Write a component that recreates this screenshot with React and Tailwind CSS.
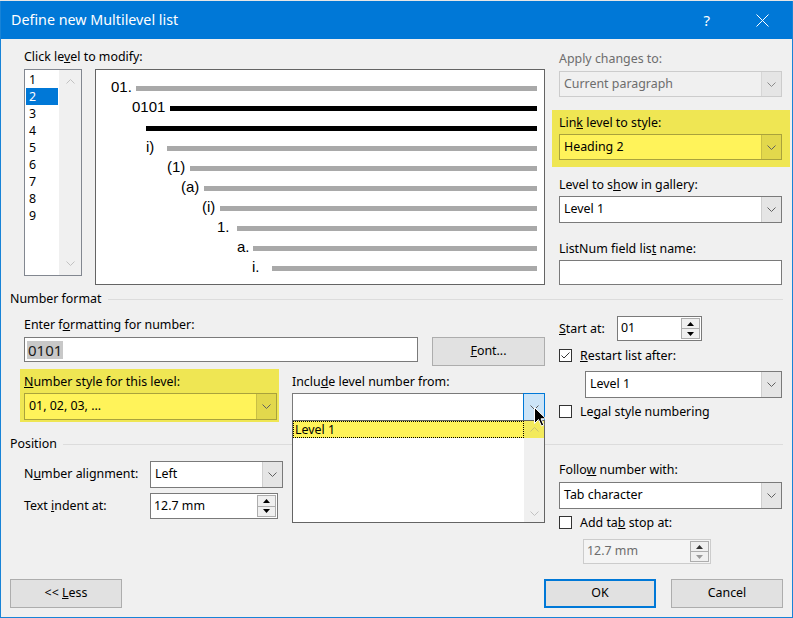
import React from "react";

const ChevDown = ({ color = "#606060" }) => (
  <svg width="9" height="5" viewBox="0 0 9 5">
    <path d="M0.5 0.5L4.5 4.5L8.5 0.5" fill="none" stroke={color} />
  </svg>
);

const ChevUp = ({ color = "#c2c2c2" }) => (
  <svg width="9" height="5" viewBox="0 0 9 5">
    <path d="M0.5 4.5L4.5 0.5L8.5 4.5" fill="none" stroke={color} />
  </svg>
);

const TriUp = ({ color = "#000" }) => (
  <svg width="7" height="4" viewBox="0 0 7 4">
    <polygon points="0,4 3.5,0 7,4" fill={color} />
  </svg>
);

const TriDown = ({ color = "#000" }) => (
  <svg width="7" height="4" viewBox="0 0 7 4">
    <polygon points="0,0 7,0 3.5,4" fill={color} />
  </svg>
);

const Combo = ({ className = "", text, disabled, yellow, active }) => {
  const box = disabled
    ? "border-[#cccccc] bg-[#f0f0f0] text-[#6d6d6d]"
    : yellow
    ? "border-[#a9a23c] bg-[#fff35a]"
    : "border-[#7a7a7a] bg-white";
  const arrow = active
    ? "-my-[1px] -mr-[1px] w-[22px] border border-[#0078d7] bg-[#cce4f7]"
    : yellow
    ? "w-[20px] border-l border-[#c9bf45] bg-[#e2d84c]"
    : disabled
    ? "w-[20px] border-l border-[#d6d6d6] bg-[#e5e5e5]"
    : "w-[20px] border-l border-[#cfcfcf] bg-[#e5e5e5]";
  return (
    <div className={`flex border ${box} ${className}`}>
      <div className="flex-1 flex items-center pl-[4px] whitespace-nowrap">{text}</div>
      <div className={`flex items-center justify-center ${arrow}`}>
        <ChevDown color={disabled ? "#8a8a8a" : "#606060"} />
      </div>
    </div>
  );
};

const Spin = ({ className = "", text, disabled }) => (
  <div
    className={`flex border ${
      disabled ? "border-[#cccccc] bg-[#f4f4f4] text-[#6d6d6d]" : "border-[#7a7a7a] bg-white"
    } ${className}`}
  >
    <div className="flex-1 flex items-center pl-[3px] whitespace-nowrap">{text}</div>
    <div className="w-[19px] flex flex-col my-[1px] mr-[1px]">
      <div className="flex-1 border border-[#adadad] bg-[#f0f0f0] flex items-center justify-center">
        <TriUp color={disabled ? "#333" : "#000"} />
      </div>
      <div className="flex-1 border border-t-0 border-[#adadad] bg-[#f0f0f0] flex items-center justify-center">
        <TriDown color={disabled ? "#9a9a9a" : "#000"} />
      </div>
    </div>
  </div>
);

const Check = ({ checked }) => (
  <div className="w-[13px] h-[13px] border border-[#333333] bg-white flex items-center justify-center shrink-0">
    {checked && (
      <svg width="11" height="11" viewBox="0 0 11 11">
        <path d="M1.5 5.5L4 8L9.5 2.5" fill="none" stroke="#333" strokeWidth="1" />
      </svg>
    )}
  </div>
);

const Button = ({ className = "", children, primary }) => (
  <div
    className={`w-[112px] h-[29px] flex items-center justify-center bg-[#e1e1e1] ${
      primary ? "border-2 border-[#0078d7]" : "border border-[#adadad]"
    } ${className}`}
  >
    {children}
  </div>
);

const Group = ({ children, className = "" }) => (
  <div className={`flex items-center h-[16px] ${className}`}>
    <span className="leading-[16px] whitespace-nowrap">{children}</span>
    <div className="flex-1 ml-[6px] h-px bg-[#dcdcdc]"></div>
  </div>
);

const rows = [
  { t: "01.", x: 111, l: 136, c: "gray" },
  { t: "0101", x: 132, l: 170, c: "black" },
  { t: "", x: 146, l: 146, c: "black" },
  { t: "i)", x: 146, l: 167, c: "gray" },
  { t: "(1)", x: 167, l: 190, c: "gray" },
  { t: "(a)", x: 181, l: 204, c: "gray" },
  { t: "(i)", x: 202, l: 220, c: "gray" },
  { t: "1.", x: 217, l: 237, c: "gray" },
  { t: "a.", x: 237, l: 253, c: "gray" },
  { t: "i.", x: 252, l: 272, c: "gray" },
];

const Preview = () => (
  <div className="w-[450px] h-[216px] border border-[#646464] bg-white pt-[8px] pr-[7px]">
    {rows.map((r, i) => (
      <div key={i} className="h-[20px] flex items-center" style={{ paddingLeft: r.x - 96 }}>
        <span
          className="font-['Liberation_Sans',Arial,sans-serif] text-[15px] leading-[18px] mb-[2px] whitespace-nowrap"
          style={{ width: r.l - r.x }}
        >
          {r.t}
        </span>
        <div className={`flex-1 h-[5px] ${r.c === "black" ? "bg-black" : "bg-[#a9a9a9]"}`}></div>
      </div>
    ))}
  </div>
);

const LevelList = () => (
  <div className="w-[58px] h-[207px] border border-[#828790] bg-white flex">
    <div className="w-[34px] pt-[1px]">
      {[1, 2, 3, 4, 5, 6, 7, 8, 9].map((n) => (
        <div
          key={n}
          className={`h-[17px] leading-[17px] mx-[1px] pl-[3px] ${n === 2 ? "bg-[#0078d7] text-white" : ""}`}
        >
          {n}
        </div>
      ))}
    </div>
    <div className="flex-1 bg-[#f0f0f0] flex flex-col justify-between items-center py-[9px]">
      <ChevUp />
      <ChevDown color="#c2c2c2" />
    </div>
  </div>
);

export default function App() {
  return (
    <div className="w-[793px] h-[618px] flex flex-col bg-[#f0f0f0] text-[12.4px] text-black font-['Noto_Sans','Segoe_UI',sans-serif] overflow-hidden">
      <div className="h-px bg-[#e6e6e6]"></div>
      <div className="flex-1 flex flex-col border-x border-b border-[#1883d7]">
        {/* title bar */}
        <div className="h-[38px] bg-[#0078d7] text-white flex items-center pl-[10px] pr-[23px]">
          <span className="text-[14.3px] leading-[20px]">Define new Multilevel list</span>
          <span className="ml-auto text-[15px] leading-[20px]">?</span>
          <svg className="ml-[46px]" width="13" height="13" viewBox="0 0 13 13">
            <path d="M0.5 0.5L12.5 12.5M12.5 0.5L0.5 12.5" stroke="#fff" strokeWidth="1" />
          </svg>
        </div>

        <div className="flex-1 flex flex-col px-[9px]">
          {/* top section */}
          <div className="flex pl-[14px]">
            <div className="w-[521px]">
              <div className="mt-[10px] leading-[16px]">
                Click le<u>v</u>el to modify:
              </div>
              <div className="mt-[4px] flex items-start gap-[13px]">
                <LevelList />
                <Preview />
              </div>
            </div>
            <div className="ml-[14px] w-[223px]">
              <div className="mt-[12px] leading-[16px] text-[#6d6d6d]">Apply changes to:</div>
              <Combo className="mt-[4px] h-[26px]" text="Current paragraph" disabled />
              <div className="mt-[13px] -ml-[7px] -mr-[8px] pl-[7px] pr-[8px] pt-[5px] pb-[7px] bg-[#efe653]">
                <div className="leading-[16px]">
                  Lin<u>k</u> level to style:
                </div>
                <Combo className="mt-[3px] h-[26px]" text="Heading 2" yellow />
              </div>
              <div className="mt-[10px] leading-[16px]">
                Level to s<u>h</u>ow in gallery:
              </div>
              <Combo className="mt-[3px] h-[27px]" text="Level 1" />
              <div className="mt-[18px] leading-[16px]">
                ListNum field lis<u>t</u> name:
              </div>
              <div className="mt-[3px] h-[25px] border border-[#7a7a7a] bg-white"></div>
            </div>
          </div>

          <Group className="mt-[6px]">Number format</Group>

          {/* number format section */}
          <div className="flex pl-[14px]">
            <div className="w-[521px]">
              <div className="mt-[10px] leading-[16px]">
                Enter f<u>o</u>rmatting for number:
              </div>
              <div className="mt-[4px] flex items-start">
                <div className="w-[394px] h-[25px] border border-[#7a7a7a] bg-white flex items-center pl-[2px]">
                  <span className="bg-[#c8c8c8] text-[15px] leading-[18px] px-[1px] text-[#1a1a1a]">0101</span>
                </div>
                <Button className="ml-[14px] w-[113px] h-[28px]">
                  <span>
                    <u>F</u>ont...
                  </span>
                </Button>
              </div>
              <div className="mt-[3px] flex items-start">
                <div className="-ml-[4px] w-[259px] pl-[4px] pt-[5px] pb-[2px] bg-[#efe653]">
                  <div className="leading-[16px]">
                    <u>N</u>umber style for this level:
                  </div>
                  <Combo className="mt-[3px] h-[27px] w-[253px]" text="01, 02, 03, ..." yellow />
                </div>
                <div className="ml-[13px] pt-[5px]">
                  <div className="leading-[16px]">
                    Inclu<u>d</u>e level number from:
                  </div>
                  <div className="relative mt-[3px]">
                    <Combo className="h-[28px] w-[253px]" text="" active />
                    <div className="absolute top-[27px] left-0 w-[253px] h-[103px] border border-[#646464] bg-white flex z-10">
                      <div className="flex-1">
                        <div className="h-[17px] leading-[15px] border border-dotted border-black bg-[#fff35a] pl-[1px]">
                          Level 1
                        </div>
                      </div>
                      <div className="w-[20px] bg-[#f0f0f0] flex flex-col items-center justify-between pb-[6px]">
                        <div className="h-[17px] w-full bg-[#f3ea5c] flex items-center justify-center">
                          <ChevUp color="#c9c070" />
                        </div>
                        <ChevDown color="#c2c2c2" />
                      </div>
                    </div>
                    <svg className="absolute left-[242px] top-[14px] z-20" width="13" height="20" viewBox="0 0 13 20">
                      <path
                        d="M0.5 0.5L0.5 16.5L4.5 12.5L7.5 19L9.8 18L7 11.8L12 11.8Z"
                        fill="#000"
                        stroke="#fff"
                        strokeWidth="1"
                      />
                    </svg>
                  </div>
                </div>
              </div>
            </div>
            <div className="ml-[14px] w-[223px]">
              <div className="mt-[9px] flex items-center">
                <div className="w-[58px] leading-[16px]">
                  <u>S</u>tart at:
                </div>
                <Spin className="w-[85px] h-[25px]" text="01" />
              </div>
              <div className="mt-[8px] flex items-center gap-[8px] h-[13px]">
                <Check checked />
                <span className="leading-[16px]">
                  <u>R</u>estart list after:
                </span>
              </div>
              <Combo className="mt-[9px] ml-[26px] w-[197px] h-[27px]" text="Level 1" />
              <div className="mt-[7px] flex items-center gap-[8px] h-[13px]">
                <Check />
                <span className="leading-[16px]">
                  Le<u>g</u>al style numbering
                </span>
              </div>
            </div>
          </div>

          <Group className="mt-[14px]">Position</Group>

          {/* position section */}
          <div className="flex pl-[14px]">
            <div className="w-[521px]">
              <div className="mt-[9px] flex items-center">
                <div className="w-[126px]">
                  N<u>u</u>mber alignment:
                </div>
                <Combo className="w-[133px] h-[27px]" text="Left" />
              </div>
              <div className="mt-[5px] flex items-center">
                <div className="w-[126px]">
                  Text <u>i</u>ndent at:
                </div>
                <Spin className="w-[128px] h-[26px]" text="12.7 mm" />
              </div>
            </div>
            <div className="ml-[14px] w-[223px]">
              <div className="mt-[10px] leading-[16px]">
                Follo<u>w</u> number with:
              </div>
              <Combo className="mt-[4px] h-[27px]" text="Tab character" />
              <div className="mt-[7px] flex items-center gap-[8px] h-[13px]">
                <Check />
                <span className="leading-[16px]">
                  Add ta<u>b</u> stop at:
                </span>
              </div>
              <Spin className="mt-[10px] ml-[24px] w-[128px] h-[25px]" text="12.7 mm" disabled />
            </div>
          </div>

          {/* buttons */}
          <div className="mt-[15px] flex justify-between">
            <Button>
              <span>
                &lt;&lt; <u>L</u>ess
              </span>
            </Button>
            <div className="flex gap-[15px]">
              <Button primary>OK</Button>
              <Button>Cancel</Button>
            </div>
          </div>
        </div>
      </div>
    </div>
  );
}
